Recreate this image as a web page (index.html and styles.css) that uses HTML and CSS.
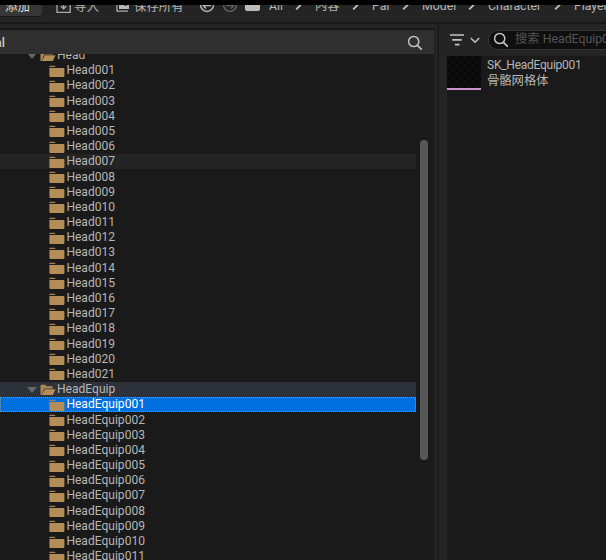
FILE: index.html
```html
<!DOCTYPE html>
<html lang="zh-CN">
<head>
<meta charset="utf-8">
<title>Content Browser</title>
<link rel="stylesheet" href="styles.css">
</head>
<body>
<svg class="defs" width="0" height="0">
  <symbol id="folder" viewBox="0 0 16 13"><path d="M.4 .8h5l1.5 1.3H.4z" fill="#a88350"/><path d="M.4 2.9h13.8q1.2 0 1.2 1.2v6.9q0 1-1.1 1H1.4q-1 0-1-1z" fill="#b58e57"/></symbol>
  <symbol id="folder-open" viewBox="0 0 16 13"><path d="M.5 11V1.8Q.5.8 1.5.8h3.7l1.5 1.5h5q1 0 1 1v1.1H4.3L1.6 11z" fill="#ad8650"/><path d="M4.8 5.3h10.7l-2.6 5.8H1.9z" fill="#b58e57"/></symbol>
  <symbol id="lens" viewBox="0 0 16 16"><circle cx="6.7" cy="6.5" r="5.1" fill="none" stroke="currentColor" stroke-width="1.5"/><path d="M10.4 10.4l4.4 4.3" stroke="currentColor" stroke-width="1.7"/></symbol>
  <symbol id="slash" viewBox="0 0 8 8"><path d="M1.2 5.4L6 .6" stroke="currentColor" stroke-width="1.8" fill="none"/></symbol>
</svg>
<div class="letterbox"></div>
<header class="toolbar">
  <div class="add"><span>添加</span></div>
  <svg class="import" width="16" height="16" viewBox="0 0 16 16" fill="none" stroke="#aaa" stroke-width="1.3"><path d="M3 3H1v11.3h13.2V3h-2M7.6 1v9M4.8 8l2.8 2.8L10.4 8"/></svg>
  <span class="t-import">导入</span>
  <svg class="save" width="14" height="16" viewBox="0 0 14 16"><path d="M1 4v10.2h11" fill="none" stroke="#aaa" stroke-width="1.3"/><path d="M3 1h10v11H3z" fill="#b8b8b8"/><path d="M8 1h3v8H8z" fill="#555"/></svg>
  <span class="t-save">保存所有</span>
  <svg class="back" width="16" height="16" viewBox="0 0 16 16" fill="none" stroke="#b5b5b5" stroke-width="1.5"><circle cx="8" cy="8" r="6.4"/><path d="M12 8.6H4.5M7 5.6L4.3 8.6 7 11.6"/></svg>
  <svg class="forward" width="16" height="16" viewBox="0 0 16 16" fill="none" stroke="#626262" stroke-width="1.5"><circle cx="8" cy="8" r="6.4"/><path d="M4 8.6h7.5M9 5.6l2.7 3L9 11.6"/></svg>
  <i class="root-folder"></i>
  <nav class="crumbs">
    <span class="all">All</span><svg><use href="#slash"/></svg>
    <span class="content">内容</span><svg><use href="#slash"/></svg>
    <span class="par">Par</span><svg><use href="#slash"/></svg>
    <span class="model">Model</span><svg><use href="#slash"/></svg>
    <span class="character">Character</span><svg><use href="#slash"/></svg>
    <span>Player</span>
  </nav>
</header>
<main>
  <section class="sources">
    <div class="source-head"><b>al</b><svg width="16" height="16"><use href="#lens"/></svg></div>
    <div class="tree-area"><div class="tree" id="tree"></div><div class="scroll"></div></div>
  </section>
  <div class="splitter"></div>
  <section class="assets">
    <div class="filter-bar">
      <svg class="filter" width="14" height="12" viewBox="0 0 14 12" stroke="#c4c4c4" stroke-width="1.7"><path d="M0 1h14M2.3 5.8h9.4M5 10.7h4.5"/></svg>
      <svg class="chevron" width="10" height="7" viewBox="0 0 10 7" fill="none" stroke="#c4c4c4" stroke-width="1.5"><path d="M.8 1L5 5.2 9.2 1"/></svg>
      <div class="search"><svg width="16" height="16"><use href="#lens"/></svg><span>搜索 HeadEquip001</span></div>
    </div>
    <div class="asset-list"><div class="asset"><div class="thumb"></div><div class="info"><div>SK_HeadEquip001</div><div class="kind">骨骼网格体</div></div></div></div>
  </section>
</main>
<script src="tree.js"></script>
</body>
</html>
```
FILE: styles.css
```css
* { box-sizing: border-box; }
body { margin: 0; width: 606px; height: 560px; overflow: hidden; display: flex; flex-direction: column; background: #242424; color: #b6b6b6; font: 12.4px/15px Roboto, "Noto Sans CJK SC", sans-serif; }
svg { display: block; flex: none; }
.defs { position: absolute; }
.letterbox { height: 5px; flex: none; background: #000; }
.toolbar { height: 19px; flex: none; display: flex; align-items: flex-start; overflow: hidden; border-bottom: 2px solid #181818; white-space: nowrap; }
.toolbar span { margin-top: -6px; height: 16px; flex: none; }
.add { width: 42px; height: 11px; flex: none; background: #363636; border-radius: 0 0 3px; box-shadow: 0 1px 1px #171717; overflow: hidden; padding-left: 5px; color: #ddd; display: flex; }
.toolbar svg { margin-top: -8px; }
.toolbar .import { margin: -7px 0 0 14px; }
.t-import { margin-left: 2px; width: 24px; }
.toolbar .save { margin: -8px 0 0 18px; }
.t-save { margin-left: 4px; width: 49px; }
.toolbar .back { margin: -8.5px 0 0 16px; }
.toolbar .forward { margin: -8.5px 0 0 7px; }
.root-folder { width: 15px; height: 6px; flex: none; margin-left: 7px; background: #bcbcbc; border-radius: 0 0 2px 2px; }
.crumbs { display: flex; margin-left: 9px; font-size: 12.3px; }
.crumbs svg { width: 8px; height: 8px; margin-top: -1px; margin-right: 12px; color: #c5c5c5; }
.all { width: 26px; }
.content { width: 37px; }
.par { width: 30px; }
.model { width: 46px; }
.character { width: 66px; }
main { flex: 1; min-height: 0; display: flex; }
.sources { width: 433.5px; flex: none; display: flex; flex-direction: column; padding-top: 4px; }
.source-head { height: 26px; flex: none; border-top: 2px solid #181818; background: #2f2f2f; display: flex; align-items: center; justify-content: space-between; padding: 0 11px 0 0; color: #d0d0d0; }
.source-head b { margin-left: -5px; font-weight: 500; }
.source-head svg { margin-top: 1px; color: #c0c0c0; }
.tree-area { flex: 1; min-height: 0; display: flex; background: #1a1a1a; overflow: hidden; }
.tree { width: 416.4px; margin-top: -6.1px; flex: none; font-size: 12.05px; }
.row { height: 15.2px; display: flex; align-items: center; padding-left: 49px; white-space: nowrap; }
.row svg { width: 16px; height: 13px; margin-top: 1px; }
.row span { margin-left: 1.4px; }
.row.parent { padding-left: 27px; }
.row.parent .arrow { width: 10px; height: 6px; margin-right: 2.5px; fill: #666; }
.row.parent span { margin-left: 1.5px; }
.row.hover { background: #242424; }
.row.path { background: #2d313a; }
.row.selected { background: #0070e0; color: #fff; outline: 1px dotted #8a9a86; outline-offset: -1px; }
.scroll { width: 8px; height: 320px; margin: 86px 0 0 3.6px; border-radius: 4px; background: #575757; }
.splitter { width: 5.5px; flex: none; border-right: 1px solid #161616; background: #232323; }
.assets { flex: 1; min-width: 0; display: flex; flex-direction: column; padding-left: 8px; }
.filter-bar { height: 32px; flex: none; display: flex; align-items: center; padding-left: 3px; }
.filter-bar .chevron { margin-left: 6px; }
.search { height: 20px; width: 140px; flex: none; margin-left: 8px; border: 1px solid #343434; border-radius: 10px; background: #0f0f0f; display: flex; align-items: center; padding-left: 4px; white-space: nowrap; color: #555; font-size: 12.3px; }
.search svg { color: #c4c4c4; }
.search span { margin-left: 6px; margin-top: -1px; }
.asset-list { flex: 1; background: #1a1a1a; }
.asset { display: flex; }
.thumb { width: 34px; height: 34px; border-bottom: 2px solid #cc91ce; background: repeating-conic-gradient(#080808 0 25%, #0d0d0d 0 50%) 0 0 / 8px 8px; }
.info { margin: 1.5px 0 0 6px; font-size: 12px; letter-spacing: -.25px; }
.kind { font-size: 12.3px; line-height: 16px; letter-spacing: 0; }
```
FILE: tree.js
```js
const pad = n => String(n).padStart(3, "0");
const parent = (name, cls) => `<div class="row parent ${cls}"><svg class="arrow" viewBox="0 0 10 6"><path d="M0 0h10L5 6z"/></svg><svg><use href="#folder-open"/></svg><span>${name}</span></div>`;
const leaf = (name, cls = "") => `<div class="row ${cls}"><svg><use href="#folder"/></svg><span>${name}</span></div>`;
let rows = parent("Head", "");
for (let i = 1; i <= 21; i++) rows += leaf("Head" + pad(i), i === 7 ? "hover" : "");
rows += parent("HeadEquip", "path");
for (let i = 1; i <= 11; i++) rows += leaf("HeadEquip" + pad(i), i === 1 ? "selected" : "");
document.getElementById("tree").innerHTML = rows;
```
